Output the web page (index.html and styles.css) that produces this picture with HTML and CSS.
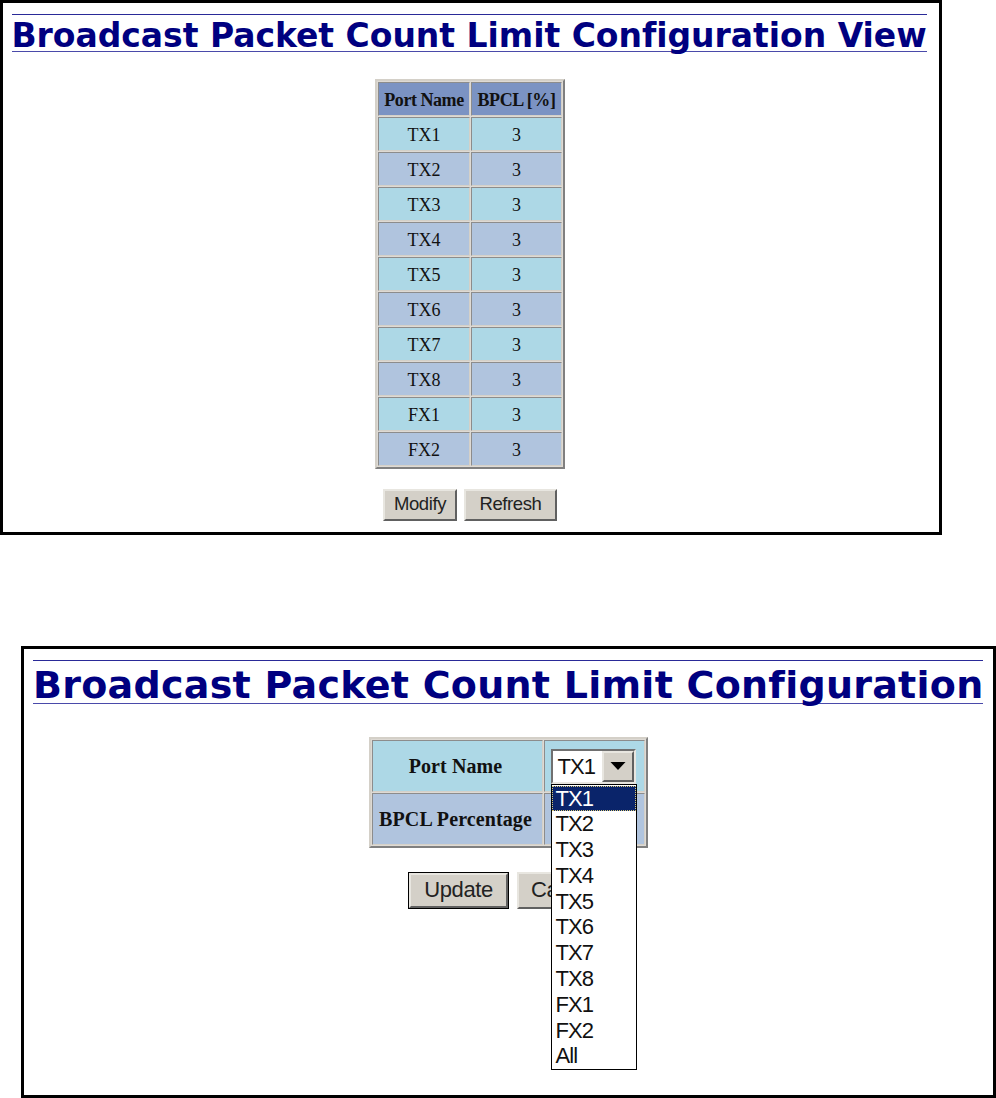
FILE: index.html
```html
<!DOCTYPE html>
<html lang="en">

<head>
  <meta charset="UTF-8">
  <title>Broadcast Packet Count Limit Configuration</title>
  <link rel="stylesheet" href="styles.css">
</head>

<body>
  <div class="panel view-panel">
    <h1>Broadcast Packet Count Limit Configuration View</h1>
    <table class="port-table">
      <tr><th class="name-col">Port Name</th><th>BPCL [%]</th></tr>
      <tr><td>TX1</td><td>3</td></tr>
      <tr><td>TX2</td><td>3</td></tr>
      <tr><td>TX3</td><td>3</td></tr>
      <tr><td>TX4</td><td>3</td></tr>
      <tr><td>TX5</td><td>3</td></tr>
      <tr><td>TX6</td><td>3</td></tr>
      <tr><td>TX7</td><td>3</td></tr>
      <tr><td>TX8</td><td>3</td></tr>
      <tr><td>FX1</td><td>3</td></tr>
      <tr><td>FX2</td><td>3</td></tr>
    </table>
    <div class="buttons">
      <button type="button" class="modify">Modify</button>
      <button type="button" class="refresh">Refresh</button>
    </div>
  </div>

  <div class="panel edit-panel">
    <h1>Broadcast Packet Count Limit Configuration</h1>
    <table class="edit-table">
      <tr>
        <th>Port Name</th>
        <td>
          <div class="select">
            <div class="select-box">
              <span class="select-value">TX1</span>
              <span class="select-arrow">
                <svg width="16" height="8" viewBox="0 0 16 8"><path d="M0.5 0H15.5L8 8Z" fill="#000"/></svg>
              </span>
            </div>
            <ul class="select-list">
              <li class="selected">TX1</li>
              <li>TX2</li>
              <li>TX3</li>
              <li>TX4</li>
              <li>TX5</li>
              <li>TX6</li>
              <li>TX7</li>
              <li>TX8</li>
              <li>FX1</li>
              <li>FX2</li>
              <li>All</li>
            </ul>
          </div>
        </td>
      </tr>
      <tr>
        <th>BPCL Percentage</th>
        <td></td>
      </tr>
    </table>
    <div class="buttons">
      <button type="button" class="update">Update</button>
      <button type="button" class="cancel">Cancel</button>
    </div>
  </div>
</body>

</html>
```
FILE: styles.css
```css
* {
  box-sizing: border-box;
}

body {
  margin: 0;
  background: #fff;
  color: #111;
  font-family: "Liberation Serif", "Times New Roman", serif;
}

.panel {
  display: flex;
  flex-direction: column;
  align-items: center;
  border: 3px solid #000;
}

.view-panel {
  width: 942px;
  height: 535px;
  padding: 11px 2px 0 0;
}

.edit-panel {
  width: 975px;
  height: 452px;
  margin: 111px 0 0 21px;
  padding: 11px 1px 0 0;
}

h1 {
  margin: 0;
  color: #000080;
  font-family: "DejaVu Sans", Verdana, sans-serif;
  font-weight: bold;
  font-variant-ligatures: none;
  white-space: nowrap;
  border-top: 1px solid #2a2a98;
  border-bottom: 1px solid #4a4aaa;
}

.view-panel h1 {
  width: 915px;
  height: 38px;
  margin-right: 2px;
  font-size: 33px;
  letter-spacing: -0.03px;
  line-height: 42px;
}

.edit-panel h1 {
  width: 950px;
  height: 44px;
  font-size: 38px;
  letter-spacing: 0.26px;
  line-height: 49px;
}

table {
  background: #dedad4;
  border: 2px solid;
  border-color: #d4d0c8 #808080 #808080 #d4d0c8;
  border-spacing: 1px;
}

th,
td {
  padding: 0;
  text-align: center;
  border: 1px solid;
  border-color: #8c8c8c #d4d0c8 #d4d0c8 #8c8c8c;
}

.port-table {
  width: 190px;
  height: 390px;
  margin-top: 27px;
  font-size: 18px;
  table-layout: fixed;
}

.port-table th,
.port-table td {
  padding-top: 2px;
}

.port-table th {
  background: #7b93c3;
  font-size: 18px;
  letter-spacing: -0.45px;
}

.port-table .name-col {
  width: 92px;
}

.port-table tr:nth-child(even) td {
  background: #add8e6;
}

.port-table tr:nth-child(odd) td {
  background: #b0c4de;
}

.buttons {
  display: flex;
}

button {
  padding: 0 0 2px;
  background: #d4d0c8;
  color: #222;
  font-family: "Liberation Sans", Arial, sans-serif;
  border: 2px solid;
  border-color: #e8e6e0 #606060 #606060 #e8e6e0;
}

.view-panel .buttons {
  margin-top: 20px;
  gap: 7px;
}

.view-panel button {
  height: 32px;
  font-size: 18.5px;
  letter-spacing: -0.4px;
}

.modify {
  width: 74px;
}

.refresh {
  width: 93px;
}

.edit-table {
  width: 279px;
  height: 111px;
  margin-top: 33px;
  font-size: 20px;
  letter-spacing: 0.1px;
  table-layout: fixed;
}

.edit-table tr {
  height: 52px;
}

.edit-table tr:first-child > * {
  background: #add8e6;
}

.edit-table tr:last-child > * {
  background: #b0c4de;
}

.edit-table th {
  width: 171px;
  padding-right: 3px;
}

.edit-table td {
  padding-left: 6px;
}

.select {
  position: relative;
  width: 86px;
  height: 35px;
  font-family: "Liberation Sans", Arial, sans-serif;
  font-size: 22px;
  letter-spacing: -0.9px;
  text-align: left;
}

.select-box {
  display: flex;
  width: 85px;
  height: 35px;
  background: #fff;
  border: 2px solid;
  border-color: #707070 #e8e6e0 #e8e6e0 #707070;
}

.select-value {
  flex: 1;
  padding-left: 5px;
  line-height: 32px;
}

.select-arrow {
  display: flex;
  align-items: center;
  justify-content: center;
  width: 32px;
  background: #d4d0c8;
  border: 2px solid;
  border-color: #e8e6e0 #606060 #606060 #e8e6e0;
}

/* open list hangs over the second row and the buttons */
.select-list {
  position: absolute;
  top: 35px;
  left: 0;
  width: 86px;
  margin: 0;
  padding: 1px 0 0;
  list-style: none;
  background: #fff;
  border: 1px solid #000;
}

.select-list li {
  height: 25.8px;
  padding-left: 4px;
  line-height: 26px;
}

.select-list .selected {
  background: #0a246a;
  color: #fff;
  outline: 1px dotted #d8c878;
  outline-offset: -1px;
}

.edit-panel .buttons {
  margin-top: 24px;
  gap: 8px;
}

.edit-panel button {
  height: 37px;
  font-size: 22px;
  letter-spacing: -0.4px;
}

.edit-panel .update {
  width: 101px;
  border-width: 3px;
  outline: 1px solid #000;
  outline-offset: -1px;
}

.edit-panel .cancel {
  width: 91px;
  padding-left: 3px;
}
```
